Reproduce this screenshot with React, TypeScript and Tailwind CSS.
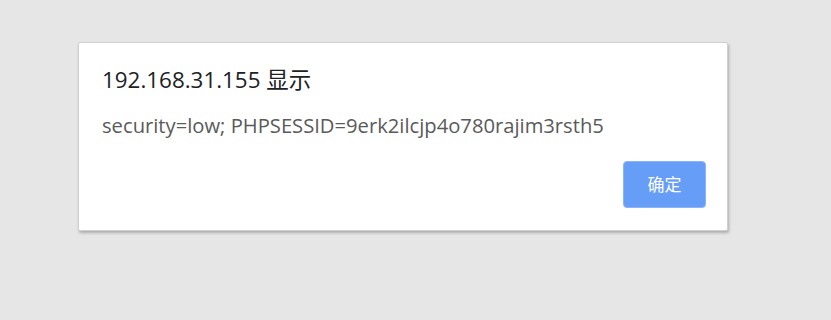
export default function App() {
  return (
    <div className="w-[831px] h-[320px] bg-[#e6e6e6] relative overflow-hidden" style={{ fontFamily: '"Open Sans", "Noto Sans CJK SC", sans-serif' }}>
      <div className="absolute left-[78px] top-[42px] w-[650px] h-[189px] bg-white rounded-[2px] border border-[#d0d0d0] shadow-[1px_2px_3px_rgba(0,0,0,0.25)] flex flex-col pl-[23px] pr-[21px] pt-[23px]">
        <div className="text-[22.4px] leading-[28px] text-[#202124]">192.168.31.155 显示</div>
        <div className="mt-[17px] text-[20.2px] leading-[28px] text-[#5a5a5a]">security=low; PHPSESSID=9erk2ilcjp4o780rajim3rsth5</div>
        <div className="mt-[22px] flex justify-end">
          <button className="w-[83px] h-[47px] rounded-[4px] bg-[#669df6] border border-[#8ab4f8] text-white text-[17px]">确定</button>
        </div>
      </div>
    </div>
  );
}
